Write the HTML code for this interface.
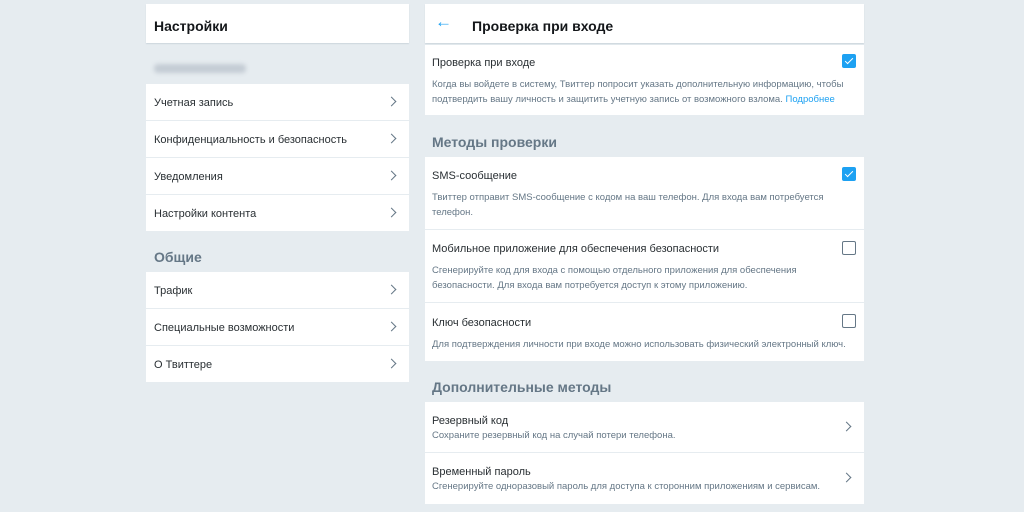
<!DOCTYPE html>
<html><head><meta charset="utf-8"><style>
*{margin:0;padding:0;box-sizing:border-box}
body{width:1024px;height:512px;background:#e6ecf0;font-family:"Liberation Sans",sans-serif;position:relative;overflow:hidden;color:#14171a}
.a{position:absolute}
.w{position:absolute;background:#fff}
.t{font-size:11px;color:#292f33;position:absolute}
.s{font-size:9.5px;color:#657786;position:absolute;line-height:15px}
.h{font-size:14px;font-weight:bold;position:absolute}
.g{font-size:14px;font-weight:bold;color:#657786;position:absolute}
.sep{position:absolute;height:1px;background:#e6ecf0}
.chev{position:absolute;width:7px;height:7px;border-right:1.3px solid #657786;border-top:1.3px solid #657786;transform:rotate(45deg)}
.cb{position:absolute;width:14px;height:14px;border-radius:2px;background:#1da1f2}
.cb:after{content:"";position:absolute;left:4.5px;top:2px;width:3px;height:7px;border-right:1.5px solid #fff;border-bottom:1.5px solid #fff;transform:rotate(45deg)}
.ce{position:absolute;width:14px;height:14px;border-radius:2px;border:1.5px solid #657786;background:#fff}
</style></head><body>
<div class="w" style="left:146px;top:4px;width:263px;height:39px;box-shadow:0 1px 1px #ccd6dd"></div>
<div class="h" style="left:154px;top:18px">Настройки</div>
<div class="a" style="left:154px;top:64px;width:92px;height:9px;background:#c4ccd4;border-radius:4px;filter:blur(2px)"></div>
<div class="w" style="left:146px;top:84px;width:263px;height:147px"></div>
<div class="t" style="left:154px;top:97px">Учетная запись</div><div class="chev" style="left:388px;top:98px"></div>
<div class="sep" style="left:146px;top:120px;width:263px"></div>
<div class="t" style="left:154px;top:134px">Конфиденциальность и безопасность</div><div class="chev" style="left:388px;top:135px"></div>
<div class="sep" style="left:146px;top:157px;width:263px"></div>
<div class="t" style="left:154px;top:171px">Уведомления</div><div class="chev" style="left:388px;top:172px"></div>
<div class="sep" style="left:146px;top:194px;width:263px"></div>
<div class="t" style="left:154px;top:208px">Настройки контента</div><div class="chev" style="left:388px;top:209px"></div>
<div class="g" style="left:154px;top:249px">Общие</div>
<div class="w" style="left:146px;top:272px;width:263px;height:110px"></div>
<div class="t" style="left:154px;top:285px">Трафик</div><div class="chev" style="left:388px;top:286px"></div>
<div class="sep" style="left:146px;top:308px;width:263px"></div>
<div class="t" style="left:154px;top:322px">Специальные возможности</div><div class="chev" style="left:388px;top:323px"></div>
<div class="sep" style="left:146px;top:345px;width:263px"></div>
<div class="t" style="left:154px;top:359px">О Твиттере</div><div class="chev" style="left:388px;top:360px"></div>
<div class="w" style="left:425px;top:4px;width:439px;height:39px;box-shadow:0 1px 1px #ccd6dd"></div>
<div class="a" style="left:435px;top:12px;color:#1da1f2;font-size:17px">←</div>
<div class="h" style="left:472px;top:18px">Проверка при входе</div>
<div class="w" style="left:425px;top:45px;width:439px;height:70px"></div>
<div class="t" style="left:432px;top:57px">Проверка при входе</div><div class="cb" style="left:842px;top:54px"></div>
<div class="s" style="left:432px;top:77px">Когда вы войдете в систему, Твиттер попросит указать дополнительную информацию, чтобы<br>подтвердить вашу личность и защитить учетную запись от возможного взлома. <span style="color:#1da1f2">Подробнее</span></div>
<div class="g" style="left:432px;top:134px">Методы проверки</div>
<div class="w" style="left:425px;top:157px;width:439px;height:204px"></div>
<div class="t" style="left:432px;top:170px">SMS-сообщение</div><div class="cb" style="left:842px;top:167px"></div>
<div class="s" style="left:432px;top:190px">Твиттер отправит SMS-сообщение с кодом на ваш телефон. Для входа вам потребуется<br>телефон.</div>
<div class="sep" style="left:425px;top:229px;width:439px"></div>
<div class="t" style="left:432px;top:243px">Мобильное приложение для обеспечения безопасности</div><div class="ce" style="left:842px;top:241px"></div>
<div class="s" style="left:432px;top:263px">Сгенерируйте код для входа с помощью отдельного приложения для обеспечения<br>безопасности. Для входа вам потребуется доступ к этому приложению.</div>
<div class="sep" style="left:425px;top:302px;width:439px"></div>
<div class="t" style="left:432px;top:317px">Ключ безопасности</div><div class="ce" style="left:842px;top:314px"></div>
<div class="s" style="left:432px;top:337px">Для подтверждения личности при входе можно использовать физический электронный ключ.</div>
<div class="g" style="left:432px;top:379px">Дополнительные методы</div>
<div class="w" style="left:425px;top:402px;width:439px;height:102px"></div>
<div class="t" style="left:432px;top:415px">Резервный код</div>
<div class="s" style="left:432px;top:428px">Сохраните резервный код на случай потери телефона.</div><div class="chev" style="left:843px;top:423px"></div>
<div class="sep" style="left:425px;top:452px;width:439px"></div>
<div class="t" style="left:432px;top:466px">Временный пароль</div>
<div class="s" style="left:432px;top:479px">Сгенерируйте одноразовый пароль для доступа к сторонним приложениям и сервисам.</div><div class="chev" style="left:843px;top:474px"></div>
</body></html>
